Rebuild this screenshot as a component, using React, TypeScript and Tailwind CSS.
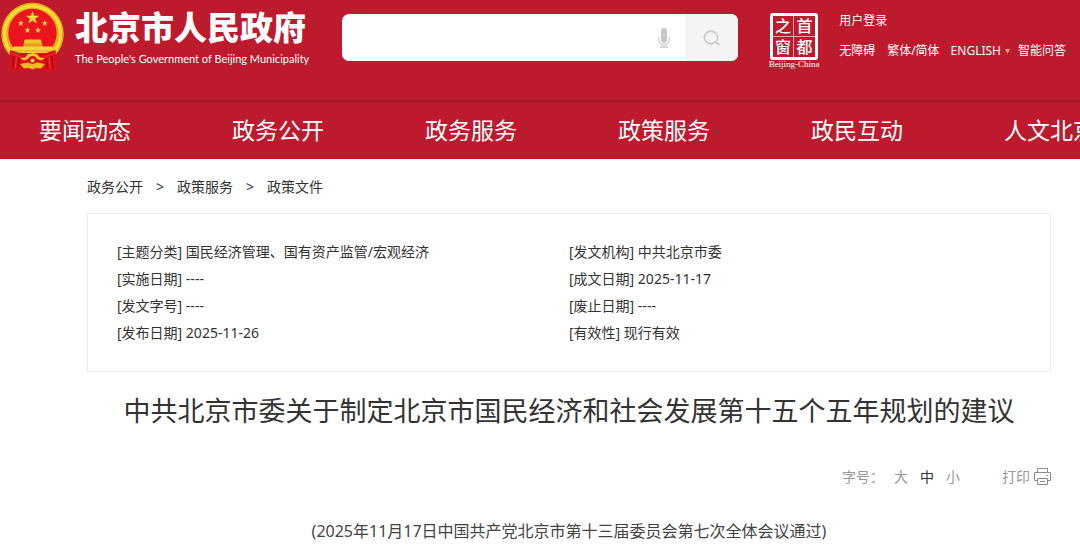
const navItems = ["要闻动态", "政务公开", "政务服务", "政策服务", "政民互动", "人文北京"];

const crumbs = ["政务公开", "政策服务", "政策文件"];

const infoLeft = [
  { label: "主题分类", value: "国民经济管理、国有资产监管/宏观经济" },
  { label: "实施日期", value: "----" },
  { label: "发文字号", value: "----" },
  { label: "发布日期", value: "2025-11-26" },
];

const infoRight = [
  { label: "发文机构", value: "中共北京市委" },
  { label: "成文日期", value: "2025-11-17" },
  { label: "废止日期", value: "----" },
  { label: "有效性", value: "现行有效" },
];

const Emblem = () => (
  <svg viewBox="0 0 66 75" className="w-[66px] h-[75px] shrink-0" aria-hidden="true">
    {/* wheat ring */}
    <circle cx="32.5" cy="34" r="31.2" fill="#e6b01a" />
    <circle cx="32.5" cy="34" r="28" fill="none" stroke="#f7d936" strokeWidth="3.5" />
    <circle cx="32.5" cy="34" r="30.4" fill="none" stroke="#d9a01c" strokeWidth="1" strokeDasharray="4 3" />
    <circle cx="32.5" cy="33" r="24.2" fill="#eb1520" />
    {/* stars */}
    <g fill="#fbdc3a">
      <path d="M32.5 11l1.7 4.7h5l-4 3 1.5 4.8-4.2-2.9-4.2 2.900 1.500-4.800-4-3h5z" />
      <path d="M20.800 20l.8 2.200h2.300L22 23.600l.7 2.300-1.900-1.400-1.900 1.400.7-2.300-1.900-1.400H20z" />
      <path d="M44.800 20l.8 2.200h2.300L46 23.600l.7 2.300-1.900-1.400-1.900 1.400.7-2.300-1.900-1.400H44z" />
      <path d="M27.500 27l.8 2.200h2.300l-1.900 1.400.7 2.300-1.900-1.400-1.900 1.400.7-2.300-1.900-1.400h2.300z" />
      <path d="M38 27l.8 2.200h2.300l-1.900 1.400.7 2.300-1.900-1.400-1.900 1.400.7-2.300-1.900-1.400h2.300z" />
    </g>
    {/* gate */}
    <path d="M25 39.500h15.500l1 1.500v3h-17.500v-3z" fill="#f3c62a" />
    <path d="M23.500 43.500h19v3.500h-19z" fill="#dfa21a" />
    <path d="M14 46.500h37.500l3 4-3 2.500h-38l-3-2.500z" fill="#f8d33a" />
    <path d="M12 51h41" stroke="#dc9d18" strokeWidth="1" />
    {/* ribbons */}
    <path d="M10 50l10 3 26 0 9.500-3 1 9 1 8-2 3-4 .5-3.500 1.500-4-2H22l-4 2-3-1.500-4.500-.5L8.500 67l1-8z" fill="#dc1019" />
    <path d="M14 56l-1.500 12M19 58l-1 11M51.500 56l1.500 12M46.500 58l1 11" stroke="#a00a14" strokeWidth="1.5" />
    <path d="M16.500 57l-1 11M49 57l1 11M11 53l10 4M54.500 53l-10 4" stroke="#f2323c" strokeWidth="1" />
    {/* cog wheel */}
    <path
      d="M20 58l5-.5 3-3.500 4.500-1 4.500 1 3 3.500 5 .5-4 2.500-4-1.500-2-2.500-2.500-.5-2.500.5-2 2.500-4 1.500z"
      fill="#f4c928"
    />
    <path d="M20 64l8-1.500 4.500 1.500 4.500-1.500 8 1.500-4 4.500-5-.5-3.500 1.500-3.500-1.500-5 .5z" fill="#f0bc22" />
    <circle cx="32.5" cy="60.5" r="2" fill="#f7d63a" />
  </svg>
);

const Seal = () => (
  <a href="#" className="flex w-[52px] shrink-0 flex-col items-center text-white">
    <div className="grid h-[47px] w-[48px] grid-cols-2 grid-rows-2 rounded-[3px] border-3 border-white text-center text-[16px] leading-[20px] font-medium">
      <span className="border-r border-b border-[#e7a9b0]">之</span>
      <span className="border-b border-[#e7a9b0]">首</span>
      <span className="border-r border-[#e7a9b0]">窗</span>
      <span>都</span>
    </div>
    <span className="font-['Liberation_Serif',serif] text-[9px] leading-[9px] whitespace-nowrap">Beijing-China</span>
  </a>
);

const MicIcon = () => (
  <svg viewBox="0 0 12 20" className="h-[20px] w-[12px]" aria-hidden="true">
    <rect x="3" y="0" width="6" height="15" rx="3" fill="#c8c8c8" />
    <path d="M.7 9v3a5.300 4.700 0 0 0 10.600 0V9" fill="none" stroke="#cfcfcf" strokeWidth="1.3" />
    <path d="M6 16.500V19M2 19h8" stroke="#c8c8c8" strokeWidth="1.5" />
  </svg>
);

const SearchIcon = () => (
  <svg viewBox="0 0 18 16" className="h-[16px] w-[18px]" fill="none" stroke="#cbcbcb" aria-hidden="true">
    <ellipse cx="8" cy="7.5" rx="6.7" ry="6.3" strokeWidth="1.7" />
    <path d="M12.800 12l3.700 3" strokeWidth="2" />
  </svg>
);

const PrintIcon = () => (
  <svg viewBox="0 0 17 17" className="h-[17px] w-[17px]" fill="none" stroke="#8c8c8c" aria-hidden="true">
    <path d="M3.500 4.500v-4h10v4" />
    <path d="M3.500 12.500h-3v-8h16v8h-3" />
    <path d="M3.500 10.500h10v6h-10z" />
    <path d="M6 13.500h5M12.500 7.500h1.500" />
  </svg>
);

const InfoList = ({ items }: { items: { label: string; value: string }[] }) => (
  <ul>
    {items.map((item) => (
      <li key={item.label}>
        [{item.label}] {item.value}
      </li>
    ))}
  </ul>
);

const Header = () => (
  <header className="bg-[#bd1a2d] text-white">
    <div className="flex h-[100px] items-start pr-[14px]">
      <a href="#" className="flex shrink-0 items-start">
        <Emblem />
        <div className="ml-[9px] w-[237px] pt-[7px] whitespace-nowrap">
          <div className="text-[33px] leading-[42px] font-black">北京市人民政府</div>
          <div className="font-['Lato',sans-serif] text-[11px] leading-[20px]">
            The People's Government of Beijing Municipality
          </div>
        </div>
      </a>

      <form className="mt-[14px] ml-[30px] flex h-[47px] min-w-0 flex-1 overflow-hidden rounded-[7px] bg-white">
        <input type="text" aria-label="搜索" className="min-w-0 flex-1 px-4 text-base text-gray-700 outline-none" />
        <button type="button" aria-label="语音" className="px-[15px]">
          <MicIcon />
        </button>
        <button type="submit" aria-label="搜索" className="flex w-[53px] items-center justify-center bg-[#f4f4f4]">
          <SearchIcon />
        </button>
      </form>

      <div className="mt-[13px] ml-[30px] shrink-0">
        <Seal />
      </div>

      <div className="mt-[11px] ml-[19px] shrink-0 text-[12px] leading-[20px] whitespace-nowrap">
        <a href="#">用户登录</a>
        <div className="mt-[10px] flex items-center">
          <a href="#">无障碍</a>
          <a href="#" className="ml-[12px]">繁体/简体</a>
          <a href="#" className="ml-[11px] flex items-center gap-[4px]">
            ENGLISH
            <svg viewBox="0 0 5 5" className="h-[5px] w-[5px]" aria-hidden="true">
              <path d="M0 0h5L2.500 5z" fill="#dfa274" />
            </svg>
          </a>
          <a href="#" className="ml-[8px]">智能问答</a>
        </div>
      </div>
    </div>

    <nav className="overflow-hidden border-t-2 border-[#a01825]">
      <ul className="flex h-[57px] items-center pl-[39px] text-[23px] whitespace-nowrap">
        {navItems.map((item) => (
          <li key={item} className="w-[193px] shrink-0">
            <a href="#">{item}</a>
          </li>
        ))}
      </ul>
    </nav>
  </header>
);

export default function App() {
  return (
    <div className="overflow-hidden bg-white font-['Noto_Sans','Noto_Sans_CJK_SC',sans-serif] text-[#333]">
      <Header />

      <main className="pr-[29px] pl-[87px]">
        <nav className="flex h-[54px] items-center gap-[13px] text-[14px]">
          {crumbs.map((crumb, i) => (
            <div key={crumb} className="flex gap-[13px]">
              {i > 0 && <span>&gt;</span>}
              <a href="#">{crumb}</a>
            </div>
          ))}
        </nav>

        <div className="grid grid-cols-2 border border-[#eeeee6] px-[29px] pt-[24px] pb-[25px] text-[14px] leading-[27px]">
          <InfoList items={infoLeft} />
          <InfoList items={infoRight} />
        </div>

        <h1 className="mt-[19px] text-center text-[27px] leading-[40px] whitespace-nowrap">
          中共北京市委关于制定北京市国民经济和社会发展第十五个五年规划的建议
        </h1>

        <div className="mt-[33px] flex h-[24px] items-center justify-end text-[14px] text-[#999]">
          <span>字号：</span>
          <div className="ml-[10px] flex gap-[12px]">
            <button type="button">大</button>
            <button type="button" className="text-[#333]">中</button>
            <button type="button">小</button>
          </div>
          <button type="button" className="ml-[42px] flex items-center gap-[4px]">
            打印
            <PrintIcon />
          </button>
        </div>

        <p className="mt-[31px] text-center text-[16px] leading-[24px] text-[#444]">
          (2025年11月17日中国共产党北京市第十三届委员会第七次全体会议通过)
        </p>
      </main>
    </div>
  );
}
